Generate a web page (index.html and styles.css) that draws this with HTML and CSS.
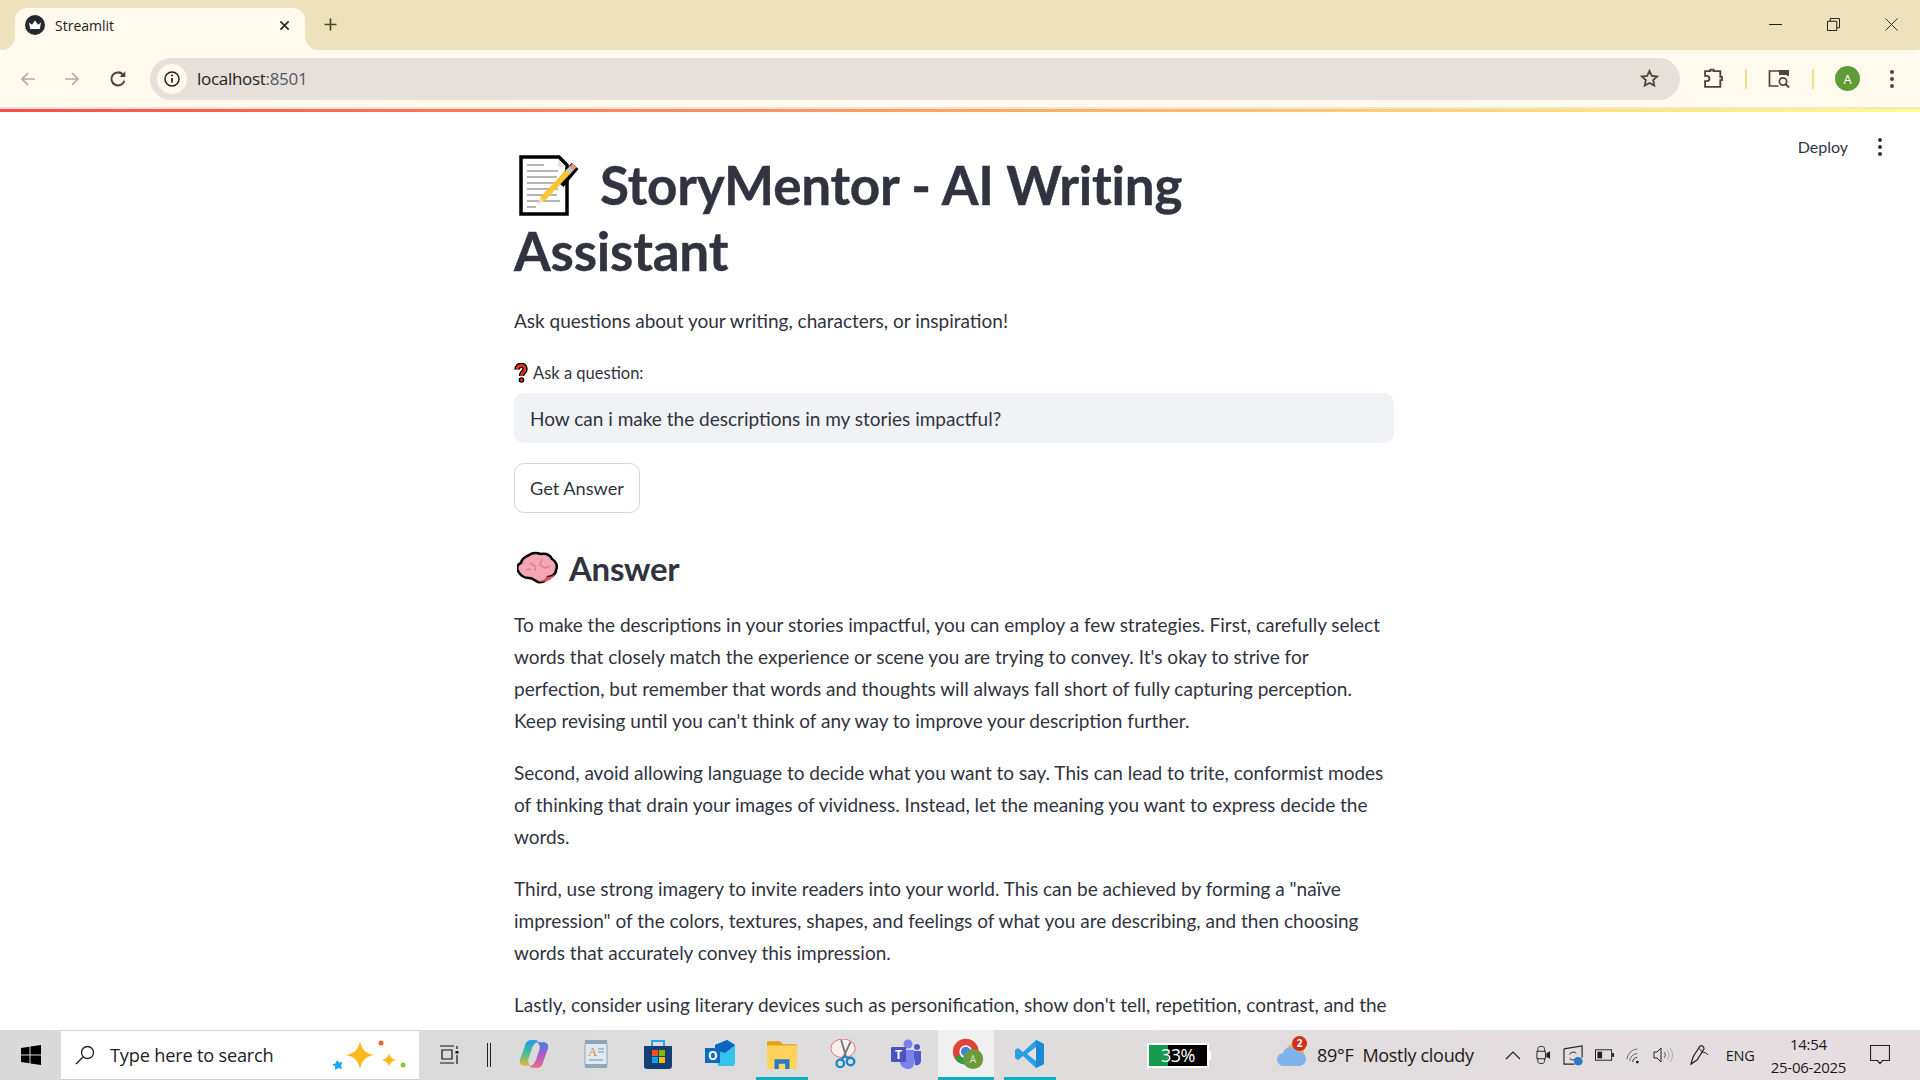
FILE: index.html
```html
<!DOCTYPE html>
<html lang="en">
<head>
    <meta charset="UTF-8">
    <meta name="viewport" content="width=device-width, initial-scale=1.0">
    <title>Streamlit</title>
    <link rel="stylesheet" href="styles.css">
</head>
<body>

    <!-- Tab strip -->
    <div class="tabstrip">
        <div class="tab">
            <svg class="favicon" viewBox="0 0 20 20"><circle cx="10" cy="10" r="10" fill="#262730"/><path d="M4 7.5l3 2.2L10 5.5l3 4.2 3-2.2-1.2 6.5H5.2z" fill="#fff"/></svg>
            <span class="tab-title">Streamlit</span>
            <svg class="tab-close" viewBox="0 0 12 12"><path d="M1.5 1.5l9 9M10.5 1.5l-9 9" stroke="#2a2a2a" stroke-width="1.8" fill="none"/></svg>
        </div>
        <svg class="new-tab" viewBox="0 0 14 14"><path d="M7 0.5v13M0.5 7h13" stroke="#4d4630" stroke-width="1.8" fill="none"/></svg>
        <div class="window-btns">
            <svg viewBox="0 0 14 14"><path d="M0 7h14" stroke="#111" stroke-width="1"/></svg>
            <svg viewBox="0 0 14 14"><path d="M.5 3.5h10v10H.5zM3.5 3.5V.5h10v10h-3" stroke="#111" stroke-width="1" fill="none"/></svg>
            <svg viewBox="0 0 14 14"><path d="M.5.5l13 13M13.5.5l-13 13" stroke="#222" stroke-width="1" fill="none"/></svg>
        </div>
    </div>

    <!-- Toolbar -->
    <div class="toolbar">
        <svg class="tool first" viewBox="0 0 16 16"><path d="M15 8H2M8 2L2 8l6 6" stroke="#b3ada0" stroke-width="1.7" fill="none"/></svg>
        <svg class="tool" viewBox="0 0 16 16"><path d="M1 8h13M8 2l6 6-6 6" stroke="#b3ada0" stroke-width="1.7" fill="none"/></svg>
        <svg class="tool reload" viewBox="0 0 16 16"><path d="M13.6 9.5A5.8 5.8 0 1 1 12.3 4" stroke="#4d4630" stroke-width="1.8" fill="none"/><path d="M14.5 1v5.2H9.3z" fill="#4d4630"/></svg>
        <div class="omnibox">
            <span class="info-chip">
                <svg viewBox="0 0 16 16"><circle cx="8" cy="8" r="7" stroke="#222" stroke-width="1.5" fill="none"/><path d="M8 7v4.500" stroke="#222" stroke-width="1.7"/><circle cx="8" cy="4.600" r="1" fill="#222"/></svg>
            </span>
            <span class="url">localhost<span class="url-port">:8501</span></span>
            <svg class="star" viewBox="0 0 18 18"><path d="M9 1.800l2.200 4.700 5.100.6-3.800 3.500 1 5.100L9 13.200l-4.500 2.500 1-5.100L1.700 7.100l5.100-.6z" stroke="#4d4630" stroke-width="1.700" fill="none"/></svg>
        </div>
        <svg class="ext" viewBox="0 0 20 20"><path d="M2 3h5V1.500h3V3h6.500v5.500H18v3h-1.500V18H2v-5.500h1.600a2.200 2.200 0 0 0 0-5H2z" stroke="#4d4630" stroke-width="1.800" fill="none"/></svg>
        <span class="tool-sep"></span>
        <svg class="panel" viewBox="0 0 22 20"><path d="M20 7V2H1.500v15h9" stroke="#4d4630" stroke-width="1.700" fill="none"/><rect x="11" y="1" width="10" height="5" fill="#4d4630"/><circle cx="15" cy="12.500" r="3.600" stroke="#4d4630" stroke-width="1.700" fill="none"/><path d="M17.500 15l3.500 3.500" stroke="#4d4630" stroke-width="1.800"/></svg>
        <span class="tool-sep"></span>
        <span class="avatar">A</span>
        <span class="menu-dots"><i></i><i></i><i></i></span>
    </div>
    <div class="toolbar-rule"></div>
    <div class="decoration"></div>

    <!-- Streamlit page -->
    <div class="page">
        <div class="st-header">
            <span class="deploy">Deploy</span>
            <span class="menu-dots st-dots"><i></i><i></i><i></i></span>
        </div>

        <div class="container">
            <h1>
                <svg class="memo" viewBox="0 0 62 62">
                    <path d="M2 2h38l8 8v49H2z" fill="#fff" stroke="#000" stroke-width="3.500"/>
                    <path d="M39 4v8h8z" fill="#e3e3e3"/>
                    <path d="M8 10h17M8 16h31M8 22h30M8 28h31M8 34h31M8 40h30M8 46h33M8 52h9" stroke="#b5b5b5" stroke-width="2"/>
                    <path d="M41 29L56 11" stroke="#000" stroke-width="9"/>
                    <path d="M18 50l3-7 4 3z" fill="#f6dcb4"/>
                    <path d="M23 44.500L50 16" stroke="#fdc52f" stroke-width="5.500"/>
                    <path d="M49 17l4-4" stroke="#c4c4c4" stroke-width="5.500"/>
                    <path d="M52.500 13.500l3-3" stroke="#e9937f" stroke-width="5.500"/>
                </svg>
                <span class="title-text">StoryMentor - AI Writing<br>Assistant</span>
            </h1>

            <p class="intro">Ask questions about your writing, characters, or inspiration!</p>

            <div class="field-label">
                <svg class="q-mark" viewBox="0 0 14 20"><path d="M3 6.500C3 1 11 1 11 6c0 3-3.500 3.500-3.500 7" fill="none" stroke="#000" stroke-width="5.500"/><circle cx="7.500" cy="17" r="2.800" fill="#000"/><path d="M3 6.500C3 1 11 1 11 6c0 3-3.500 3.500-3.500 7" fill="none" stroke="#e8320f" stroke-width="2.800"/><circle cx="7.500" cy="17" r="1.500" fill="#e8320f"/></svg>
                Ask a question:
            </div>
            <div class="text-input">How can i make the descriptions in my stories impactful?</div>
            <button class="get-answer">Get Answer</button>

            <h3>
                <svg class="brain" viewBox="0 0 42 34"><path d="M4 12C5 6 10 6 12 4c4-3 9-2 12-1 5-1 9 1 11 5 4 2 6 7 4 11 0 5-5 7-8 7-2 4-5 6-10 5-3-1-5-4-9-4-6 0-9-3-11-7-2-4 0-7 3-8z" fill="#f4a6b4" stroke="#000" stroke-width="2.500"/><path d="M18 29c5 2 9 1 12-3 3 0 6-1 8-4-2 8-12 11-20 7z" fill="#e8505f"/><path d="M13 12l5 3v5M25 8l-2 6 5 3M33 15l-5 2M9 19l5-1" fill="none" stroke="#e07f90" stroke-width="1.500"/></svg>
                Answer
            </h3>

            <p class="answer">To make the descriptions in your stories impactful, you can employ a few strategies. First, carefully select<br>words that closely match the experience or scene you are trying to convey. It's okay to strive for<br>perfection, but remember that words and thoughts will always fall short of fully capturing perception.<br>Keep revising until you can't think of any way to improve your description further.</p>
            <p class="answer">Second, avoid allowing language to decide what you want to say. This can lead to trite, conformist modes<br>of thinking that drain your images of vividness. Instead, let the meaning you want to express decide the<br>words.</p>
            <p class="answer">Third, use strong imagery to invite readers into your world. This can be achieved by forming a "naïve<br>impression" of the colors, textures, shapes, and feelings of what you are describing, and then choosing<br>words that accurately convey this impression.</p>
            <p class="answer">Lastly, consider using literary devices such as personification, show don't tell, repetition, contrast, and the<br>rule of three to enhance your descriptions.</p>
        </div>
    </div>

    <!-- Windows taskbar -->
    <div class="taskbar">
        <div class="start">
            <svg viewBox="0 0 20 20"><path d="M0 3l8.500-1.200v7.700H0zM9.500 1.600L20 0v9.500H9.500zM0 10.500h8.500v7.700L0 17zM9.500 10.500H20V20L9.500 18.400z" fill="#000"/></svg>
        </div>
        <div class="search">
            <svg class="search-icon" viewBox="0 0 20 20"><circle cx="12.500" cy="7.500" r="6" stroke="#222" stroke-width="1.300" fill="none"/><path d="M8 12L1 19" stroke="#222" stroke-width="1.500"/></svg>
            <span class="search-text">Type here to search</span>
            <svg class="sparkles" viewBox="0 0 77 32">
                <path d="M29 2c2 9 5 12 14 14-9 2-12 5-14 14-2-9-5-12-14-14 9-2 12-5 14-14z" fill="#fdb81e"/>
                <path d="M58 14c1 4 3 6 7 7-4 1-6 3-7 7-1-4-3-6-7-7 4-1 6-3 7-7z" fill="#fdb81e"/>
                <path d="M6 21l2 2.500 3.500-.5-1.500 3.500 1 3.500-3.500-1-3.500 2v-3.500L1 25.500l3.500-1z" fill="#1ea7f0"/>
                <circle cx="50" cy="4" r="2.500" fill="#f0622d"/>
                <circle cx="72" cy="26" r="2.500" fill="#8cc63f"/>
            </svg>
        </div>
        <div class="task-view">
            <svg viewBox="0 0 20 20"><path d="M1 1h14M3 5h10v9H3zM1 18h14" stroke="#111" stroke-width="1.200" fill="none"/><path d="M18 1v3M18 10v9" stroke="#111" stroke-width="1.200"/><rect x="16.500" y="6" width="3" height="2.500" fill="#111"/></svg>
        </div>
        <div class="tb-divider"></div>

        <div class="apps">
            <div class="app">
                <svg viewBox="0 0 28 28"><defs><linearGradient id="cpl" x1="0" y1="0" x2="0" y2="1"><stop offset="0" stop-color="#1f9be8"/><stop offset=".55" stop-color="#4fc08d"/><stop offset="1" stop-color="#f2b13d"/></linearGradient><linearGradient id="cpr" x1="0" y1="0" x2="0" y2="1"><stop offset="0" stop-color="#3f7fe0"/><stop offset=".5" stop-color="#b05ad2"/><stop offset="1" stop-color="#ef6f7e"/></linearGradient></defs><path d="M12 1C7 1 6 4 5 8L1 19c-1 4 1 6 4 6h7c-3-1-4-3-3-7l3-9c1-3 3-6 6-7-1-1-3-1-6-1z" fill="url(#cpl)"/><path d="M16 27c5 0 6-3 7-7l4-11c1-4-1-6-4-6h-7c3 1 4 3 3 7l-3 9c-1 3-3 6-6 7 1 1 3 1 6 1z" fill="url(#cpr)"/></svg>
            </div>
            <div class="app">
                <svg viewBox="0 0 28 30"><rect x="3" y="3" width="22" height="25" rx="2" fill="#dfe9f2" stroke="#8fa6ba"/><rect x="3" y="1" width="22" height="4" fill="#8fa6ba"/><rect x="3" y="25" width="22" height="4" fill="#8fa6ba"/><text x="6" y="17" class="wordpad-a">A</text><path d="M16 10h6M16 13h6M7 21h14" stroke="#7f93a6"/></svg>
            </div>
            <div class="app">
                <svg viewBox="0 0 28 30"><path d="M8 7V2h12v5" stroke="#2aa5e8" stroke-width="2" fill="none"/><path d="M0 7h28v20a3 3 0 0 1-3 3H3a3 3 0 0 1-3-3z" fill="#163f73"/><rect x="8" y="11" width="6" height="6" fill="#f25022"/><rect x="15" y="11" width="6" height="6" fill="#7fba00"/><rect x="8" y="18" width="6" height="6" fill="#00a4ef"/><rect x="15" y="18" width="6" height="6" fill="#ffb900"/></svg>
            </div>
            <div class="app">
                <svg viewBox="0 0 30 30"><path d="M10 6l12-5 8 5v18c0 2-1 3-3 3H13z" fill="#35c3ee"/><path d="M10 6l12-5 8 5-10 8-10-3z" fill="#0c64c0"/><rect x="0" y="9" width="15" height="15" fill="#0f6cbd"/><text x="3" y="21" class="outlook-o">O</text></svg>
            </div>
            <div class="app open">
                <svg viewBox="0 0 28 28"><path d="M0 2h12l3 3h13v23H0z" fill="#e3a21a"/><path d="M0 6h28v22H0z" fill="#ffd25c"/><path d="M7 28v-9h14v9h-4v-5h-6v5z" fill="#2a79c4"/></svg>
            </div>
            <div class="app">
                <svg viewBox="0 0 30 32"><ellipse cx="14" cy="10" rx="13" ry="10" fill="#fbeeee" stroke="#e76a6a"/><path d="M12 1l5 17M22 3l-7 15" stroke="#777" stroke-width="2"/><circle cx="11" cy="26" r="4" fill="none" stroke="#1b86c8" stroke-width="2.500"/><circle cx="22" cy="24" r="4" fill="none" stroke="#1b86c8" stroke-width="2.500"/><path d="M15 18l-3 5M16 18l4 3" stroke="#1b86c8" stroke-width="2.500"/></svg>
            </div>
            <div class="app">
                <svg viewBox="0 0 30 30"><circle cx="17" cy="5" r="4.500" fill="#7b83eb"/><circle cx="26" cy="8" r="3" fill="#5059c9"/><path d="M22 12h8v10c0 3-3 5-6 4z" fill="#5059c9"/><path d="M9 11h14v13c0 4-3 6-6 6-4 0-8-3-8-7z" fill="#7b83eb"/><rect x="0" y="8" width="15" height="15" rx="1" fill="#4b53bc"/><text x="4" y="20" class="teams-t">T</text></svg>
            </div>
            <div class="app active">
                <svg viewBox="0 0 34 36"><circle cx="14" cy="16" r="14" fill="#dd4437"/><path d="M14 16L2 23a14 14 0 0 0 13 7z" fill="#2f9e44"/><path d="M14 16l1 14a14 14 0 0 0 13-14z" fill="#f5c518"/><circle cx="14" cy="16" r="7" fill="#fff"/><circle cx="14" cy="16" r="5.300" fill="#3b83ee"/><circle cx="22" cy="24" r="11" fill="#6a9a3a"/><text x="18.500" y="28.500" class="chrome-a">A</text></svg>
            </div>
            <div class="app open">
                <svg viewBox="0 0 30 30"><path d="M21 1l8 4v20l-8 4L8 17l-5 4-3-2v-8l3-2 5 4z" fill="#2a9fe6"/><path d="M21 1l8 4v20l-8 4z" fill="#1b8ad2"/><path d="M21 8v14l-9-7z" fill="#e6e1e3"/></svg>
            </div>
        </div>

        <div class="battery-meter">
            <div class="battery-fill"></div>
            <span class="battery-label">33%</span>
        </div>

        <div class="weather">
            <svg class="cloud" viewBox="0 0 30 24"><circle cx="18" cy="9" r="9" fill="#f5b53a"/><path d="M7 23a6.500 6.500 0 0 1-1-13 8 8 0 0 1 15-1 7 7 0 0 1 2 14z" fill="#7eb4ea"/></svg>
            <span class="badge">2</span>
            <span class="temp">89°F</span>
            <span class="cond">Mostly cloudy</span>
        </div>

        <div class="tray">
            <svg class="t-chev" viewBox="0 0 16 10"><path d="M1 9l7-7 7 7" stroke="#222" stroke-width="1.200" fill="none"/></svg>
            <svg class="t-cam" viewBox="0 0 16 20"><path d="M2 6V3c0-1 1-2 2-2h3c1 0 2 1 2 2v3M2 14v3c0 1 1 2 2 2h3c1 0 2-1 2-2v-3" stroke="#222" fill="none"/><rect x="1" y="6" width="9" height="8" fill="none" stroke="#222"/><path d="M11 8l4-2v8l-4-2z" fill="#222"/></svg>
            <svg class="t-update" viewBox="0 0 22 22"><path d="M1 4l19-3v12M1 4v16h11" stroke="#222" stroke-width="1.200" fill="none"/><path d="M7 10a4 4 0 0 1 7-1M14 13a4 4 0 0 1-7 1" stroke="#222" fill="none"/><circle cx="16" cy="17" r="4.500" fill="#2a79c4"/></svg>
            <svg class="t-batt" viewBox="0 0 20 12"><rect x=".5" y=".5" width="17" height="11" fill="none" stroke="#222"/><rect x="2.500" y="2.500" width="5" height="7" fill="#222"/><rect x="18" y="4" width="2" height="4" fill="#222"/></svg>
            <svg class="t-wifi" viewBox="0 0 18 18"><path d="M1 13a12 12 0 0 1 11-11M4 15a8 8 0 0 1 8-8" stroke="#666" fill="none"/><path d="M7 16a5 5 0 0 1 5-5" stroke="#333" fill="none"/><circle cx="12" cy="16" r="1.500" fill="#222"/></svg>
            <svg class="t-vol" viewBox="0 0 20 18"><path d="M1 6h3l4-4v14l-4-4H1z" stroke="#222" fill="none"/><path d="M11 6a4 4 0 0 1 0 6" stroke="#555" fill="none"/><path d="M14 4a8 8 0 0 1 0 10M17 2a11 11 0 0 1 0 14" stroke="#aaa" fill="none"/></svg>
            <svg class="t-pen" viewBox="0 0 20 22"><path d="M2 20l2-7 7-11c2-1 4 0 4 3l-7 11z" stroke="#222" stroke-width="1.200" fill="none"/><path d="M12 8c3 0 6 1 7 3M9 4l5 4" stroke="#222" fill="none"/></svg>
            <span class="eng">ENG</span>
            <div class="clock"><span>14:54</span><span>25-06-2025</span></div>
            <svg class="t-notif" viewBox="0 0 20 20"><path d="M.5.5h19v15h-7l-2.500 3-2.500-3h-7z" stroke="#222" stroke-width="1.200" fill="none"/></svg>
        </div>
    </div>

</body>
</html>
```

FILE: styles.css
```css
html, body {
    margin: 0;
    padding: 0;
}

body {
    width: 1920px;
    height: 1080px;
    overflow: hidden;
    display: flex;
    flex-direction: column;
    font-family: 'Lato', 'Noto Sans', sans-serif;
    background-color: #fff;
    color: #31333f;
}

svg {
    display: block;
    flex: none;
}

/* Tab strip */
.tabstrip {
    height: 50px;
    flex: none;
    display: flex;
    align-items: flex-start;
    background-color: #ede2bb;
}

.tab {
    position: relative;
    width: 290px;
    height: 42px;
    box-sizing: border-box;
    margin: 8px 0 0 15px;
    padding: 0 13px 8px 10px;
    display: flex;
    align-items: center;
    background-color: #fff9ee;
    border-radius: 12px 12px 0 0;
}

.tab::before,
.tab::after {
    content: "";
    position: absolute;
    bottom: 0;
    width: 14px;
    height: 14px;
}

.tab::before {
    left: -14px;
    background: radial-gradient(circle at 0 0, #ede2bb 14px, #fff9ee 14.5px);
}

.tab::after {
    right: -14px;
    background: radial-gradient(circle at 100% 0, #ede2bb 14px, #fff9ee 14.5px);
}

.favicon {
    width: 20px;
    height: 20px;
}

.tab-title {
    margin-left: 10px;
    flex: 1;
    font-family: 'Open Sans', sans-serif;
    font-size: 14px;
    color: #222;
}

.tab-close {
    width: 11px;
    height: 11px;
    margin-right: 2px;
}

.new-tab {
    width: 13px;
    height: 13px;
    margin: 18px 0 0 19px;
}

.window-btns {
    margin: 18px 0 0 auto;
    padding-right: 22px;
    display: flex;
    gap: 45px;
}

.window-btns svg {
    width: 13px;
    height: 13px;
}

/* Toolbar */
.toolbar {
    height: 57px;
    flex: none;
    box-sizing: border-box;
    display: flex;
    align-items: center;
    background-color: #fff9ee;
    border-radius: 10px 10px 0 0;
}

.tool {
    width: 16px;
    height: 16px;
    margin-left: 28px;
}

.tool.first {
    margin-left: 20px;
}

.tool.reload {
    width: 18px;
    height: 18px;
    margin-left: 29px;
}

.omnibox {
    width: 1530px;
    height: 42px;
    margin-left: 23px;
    padding: 0 21px 0 7px;
    box-sizing: border-box;
    display: flex;
    align-items: center;
    background-color: #e7e0da;
    border-radius: 21px;
}

.info-chip {
    width: 30px;
    height: 30px;
    display: flex;
    align-items: center;
    justify-content: center;
    background-color: #fff9ee;
    border-radius: 50%;
}

.info-chip svg {
    width: 16px;
    height: 16px;
}

.url {
    margin-left: 10px;
    flex: 1;
    font-family: 'Open Sans', sans-serif;
    font-size: 17px;
    letter-spacing: -0.3px;
    color: #222;
}

.url-port {
    color: #4f5a68;
}

.star {
    width: 19px;
    height: 19px;
}

.ext {
    width: 21px;
    height: 21px;
    margin: 0 -2px 0 23px;
}

.tool-sep {
    width: 2px;
    height: 20px;
    margin: 0 23px;
    background-color: #f7dd85;
}

.panel {
    width: 22px;
    height: 20px;
    margin: 0 -1px 0 -2px;
}

.avatar {
    width: 25px;
    height: 25px;
    margin-left: -2px;
    display: flex;
    align-items: center;
    justify-content: center;
    border-radius: 50%;
    background-color: #5f9c38;
    color: #fff;
    font-family: 'Open Sans', sans-serif;
    font-size: 13px;
}

.menu-dots {
    margin-left: 30px;
    display: flex;
    flex-direction: column;
    gap: 3px;
}

.menu-dots i {
    width: 4px;
    height: 4px;
    border-radius: 50%;
    background-color: #4d4630;
}

.toolbar-rule {
    height: 2px;
    flex: none;
    background-color: #efe6d6;
}

.decoration {
    height: 3px;
    flex: none;
    background: linear-gradient(90deg, #ff4b4b, #ffff7d);
}

/* Streamlit page */
.page {
    position: relative;
    flex: 1;
    min-height: 0;
    overflow: hidden;
    display: flex;
    justify-content: center;
    padding-right: 12px;
}

.st-header {
    position: absolute;
    top: 25px;
    right: 38px;
    display: flex;
    align-items: center;
}

.deploy {
    font-size: 16px;
    color: #31333f;
}

.st-dots {
    margin-left: 30px;
}

.st-dots i {
    background-color: #31333f;
}

.container {
    width: 880px;
}

h1 {
    position: relative;
    margin: 0;
    padding-top: 40px;
    font-size: 53px;
    line-height: 66px;
    font-weight: 700;
    letter-spacing: -0.2px;
    -webkit-text-stroke: 0.4px #31333f;
}

.title-text {
    display: block;
    text-indent: 86px;
}

.memo {
    position: absolute;
    left: 5px;
    top: 43px;
    width: 62px;
    height: 62px;
}

.intro,
.answer {
    margin: 0;
    font-size: 19px;
    line-height: 32px;
}

.intro {
    margin-top: 21px;
}

.field-label {
    margin-top: 24px;
    display: flex;
    align-items: center;
    gap: 5px;
    font-size: 16.5px;
    line-height: 24px;
    color: #31333f;
}

.q-mark {
    width: 14px;
    height: 20px;
}

.text-input {
    height: 50px;
    margin-top: 8px;
    padding: 0 16px;
    display: flex;
    align-items: center;
    background-color: #f0f2f6;
    border-radius: 10px;
    font-size: 19px;
}

.get-answer {
    display: block;
    height: 50px;
    margin-top: 20px;
    padding: 0 15px;
    background-color: #fff;
    border: 1px solid #d5d6d9;
    border-radius: 10px;
    font-family: inherit;
    font-size: 18.2px;
    color: #31333f;
}

h3 {
    margin: 29px 0 0;
    display: flex;
    align-items: center;
    gap: 10px;
    font-size: 33px;
    line-height: 52px;
    font-weight: 700;
    letter-spacing: -0.3px;
}

.brain {
    width: 42px;
    height: 34px;
    margin-left: 3px;
}

.answer {
    margin-top: 20px;
}

h3 + .answer {
    margin-top: 15px;
}

/* Windows taskbar */
.taskbar {
    height: 50px;
    flex: none;
    display: flex;
    align-items: center;
    background: linear-gradient(90deg, #d9d9d9, #dedcdc 50%, #e6dde0);
    font-family: 'Open Sans', sans-serif;
    color: #1a1a1a;
}

.start {
    width: 61px;
    display: flex;
    justify-content: center;
}

.start svg {
    width: 20px;
    height: 20px;
}

.search {
    width: 358px;
    height: 50px;
    box-sizing: border-box;
    display: flex;
    align-items: center;
    padding: 0 11px 0 14px;
    background-color: #fff;
    border: 1px solid #cfcfcf;
    border-width: 1px 0;
}

.search-icon {
    width: 20px;
    height: 20px;
}

.search-text {
    margin-left: 15px;
    font-size: 18.2px;
    letter-spacing: -0.2px;
    color: #222;
}

.sparkles {
    width: 77px;
    height: 32px;
    margin-left: auto;
}

.task-view {
    margin-left: 20px;
}

.task-view svg {
    width: 20px;
    height: 20px;
}

.tb-divider {
    width: 4px;
    height: 24px;
    margin-left: 28px;
    border-left: 1px solid #222;
    border-right: 1px solid #222;
    box-sizing: border-box;
}

.apps {
    display: flex;
    margin-left: 12px;
}

.app {
    width: 52px;
    height: 50px;
    margin: 0 5px;
    box-sizing: border-box;
    display: flex;
    align-items: center;
    justify-content: center;
    border-bottom: 3px solid transparent;
}

.app svg {
    width: 30px;
    height: 30px;
}

.app.open {
    border-bottom-color: #08b2c0;
}

.app.active {
    width: 56px;
    margin-left: 1px;
    border-bottom-color: #08b2c0;
    background-color: #f0f0f0;
}

.app.active svg {
    width: 33px;
    height: 33px;
    margin-left: 5px;
}

.wordpad-a {
    font-family: 'Liberation Serif', serif;
    font-size: 13px;
    fill: #e8822e;
}

.outlook-o,
.teams-t {
    font-family: 'Open Sans', sans-serif;
    font-size: 12px;
    font-weight: 700;
    fill: #fff;
}

.chrome-a {
    font-family: 'Open Sans', sans-serif;
    font-size: 11px;
    fill: #dfe8d0;
}

.battery-meter {
    position: relative;
    width: 62px;
    height: 25px;
    margin-left: 86px;
    box-sizing: border-box;
    border: 2px solid #fff;
    background-color: #000;
    display: flex;
    align-items: center;
    justify-content: center;
}

.battery-meter::after {
    content: "";
    position: absolute;
    right: -4px;
    top: 6px;
    width: 2px;
    height: 9px;
    background-color: #fff;
}

.battery-fill {
    position: absolute;
    left: 0;
    top: 0;
    bottom: 0;
    width: 33%;
    background-color: #169b4e;
}

.battery-label {
    position: relative;
    font-size: 18px;
    letter-spacing: -0.5px;
    color: #fff;
}

.weather {
    position: relative;
    margin-left: 68px;
    display: flex;
    align-items: center;
    font-size: 18px;
    letter-spacing: -0.3px;
}

.cloud {
    width: 30px;
    height: 24px;
}

.badge {
    position: absolute;
    left: 15px;
    top: -7px;
    width: 15px;
    height: 15px;
    border-radius: 50%;
    background-color: #d1301f;
    color: #fff;
    font-size: 10px;
    font-weight: 700;
    line-height: 15px;
    text-align: center;
}

.temp {
    margin-left: 10px;
}

.cond {
    margin-left: 9px;
}

.tray {
    display: flex;
    align-items: center;
    margin-left: 31px;
}

.t-chev { width: 16px; height: 10px; }
.t-cam { width: 15px; height: 20px; margin-left: 15px; }
.t-update { width: 21px; height: 21px; margin-left: 12px; }
.t-batt { width: 19px; height: 12px; margin-left: 11px; }
.t-wifi { width: 17px; height: 17px; margin-left: 12px; }
.t-vol { width: 20px; height: 18px; margin-left: 10px; }
.t-pen { width: 20px; height: 22px; margin-left: 16px; }

.eng {
    margin-left: 17px;
    font-size: 14.5px;
    letter-spacing: -0.3px;
}

.clock {
    width: 80px;
    margin-left: 14px;
    display: flex;
    flex-direction: column;
    align-items: center;
    gap: 5px;
    font-size: 15px;
    line-height: 18px;
    letter-spacing: -0.3px;
}

.t-notif {
    width: 20px;
    height: 20px;
    margin-left: 22px;
}
```
